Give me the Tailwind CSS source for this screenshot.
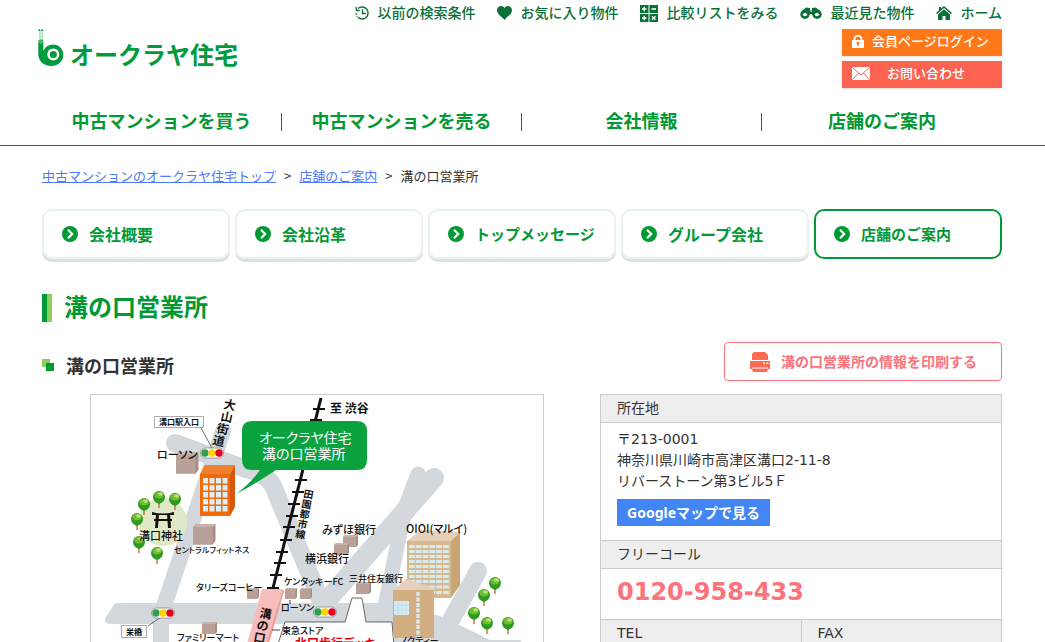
<!DOCTYPE html>
<html lang="ja">
<head>
  <meta charset="UTF-8" />
  <meta name="viewport" content="width=device-width, initial-scale=1.0" />
  <title>溝の口営業所 | オークラヤ住宅</title>
  <script src="https://cdn.jsdelivr.net/npm/@tailwindcss/browser@4"></script>
</head>
<body class="min-h-screen bg-white font-['DejaVu_Sans','Noto_Sans_CJK_JP',sans-serif] text-[#333333]">

  <!-- Header -->
  <header class="border-b border-[#0a8429]">
    <div class="max-w-[961px] mx-auto pr-px">

      <!-- Utility links -->
      <ul class="flex justify-end gap-[22px] pt-[3px] text-sm leading-5 font-medium text-[#0b7038]">
        <li>
          <a href="#" class="flex items-center gap-2">
            <svg class="w-[14px] h-[14px]" viewBox="0 0 14 14" fill="none" stroke="currentColor" stroke-width="1.4">
              <path d="M3 2.600A6 6 0 1 1 3 11.400" />
              <path d="M0.500 8h1.600M1.500 10.500h1" />
              <path d="M1 1l0.500 3.500h3.300M7.500 3.500V7.500H11" />
            </svg>
            以前の検索条件
          </a>
        </li>
        <li>
          <a href="#" class="flex items-center gap-2">
            <svg class="w-[15px] h-[14px]" viewBox="0 0 15 14" fill="currentColor">
              <path d="M7.500 14C5 10.500 0 8.500 0 4.200 0 1.800 1.800 0 4 0c1.600 0 2.800 0.800 3.500 2C8.200 0.800 9.400 0 11 0c2.200 0 4 1.800 4 4.200 0 4.300-5 6.300-7.500 9.800z" />
            </svg>
            お気に入り物件
          </a>
        </li>
        <li>
          <a href="#" class="flex items-center gap-2">
            <svg class="w-[18px] h-[17px]" viewBox="0 0 18 17">
              <path fill="currentColor" d="M0 0h8.500v8H0zM9.500 0H18v8H9.500zM0 9h8.500v8H0zM9.500 9H18v8H9.500z" />
              <path stroke="#fff" stroke-width="1.400" d="M2 4h4.500M4.250 1.800v4.400M11.500 4H16M2 13h4.500M4.250 10.800v4.400M12 11.300l3.500 3.500M15.500 11.300L12 14.800" />
            </svg>
            比較リストをみる
          </a>
        </li>
        <li>
          <a href="#" class="flex items-center gap-2">
            <svg class="w-[22px] h-[12px]" viewBox="0 0 22 12" fill="currentColor">
              <path d="M3 3L6 0.500l4 0.500v2h2V1l4-0.500L19 3l2 3-7 3-2-2h-2L8 9 1 6z" />
              <circle cx="5" cy="7.200" r="4.700" />
              <circle cx="17" cy="7.200" r="4.700" />
              <ellipse cx="5" cy="7.600" rx="2.200" ry="1.600" fill="#fff" />
              <ellipse cx="17" cy="7.600" rx="2.200" ry="1.600" fill="#fff" />
              <path d="M10.300 3.200h1.400v1.500h-1.400z" fill="#fff" />
            </svg>
            最近見た物件
          </a>
        </li>
        <li>
          <a href="#" class="flex items-center gap-2">
            <svg class="w-[16px] h-[14px]" viewBox="0 0 16 14" fill="currentColor">
              <path d="M8 0l8 7-1 1-7-6-7 6-1-1L3 4.300V1h2v1.600z" />
              <path d="M8 3.300l6 5.200V14H9.500v-4h-3v4H2V8.500z" />
            </svg>
            ホーム
          </a>
        </li>
      </ul>

      <!-- Logo and account buttons -->
      <div class="flex justify-between items-start pt-[6px]">
        <a href="#" class="flex items-end gap-[5px] -ml-1 font-['Noto_Sans_CJK_JP',sans-serif] text-[#009b3f]">
          <svg class="w-[27px] h-[38px]" viewBox="0 0 27 38">
            <path d="M2 2v10M4.200 2v10" stroke="#009b3f" stroke-width="0.500" />
            <path d="M0.300 0.500h2v1.600h-2zM3.200 0.500h2v1.600h-2z" fill="#009b3f" />
            <path d="M0.300 12.500Q0.300 10.500 2.800 10.500T5.300 12.500V22Q8 15.500 15.300 15.500C21 15.500 25.300 20 25.300 26S20.500 37 13 37 0.300 32 0.300 25z" fill="#009b3f" />
            <circle cx="15.300" cy="25.500" r="6" fill="#fff" />
            <circle cx="15.300" cy="25.500" r="3.600" fill="#009b3f" />
            <circle cx="2.800" cy="13" r="1.200" fill="none" stroke="#fff" stroke-width="0.500" />
          </svg>
          <span class="text-2xl leading-[26px] font-bold">オークラヤ住宅</span>
        </a>
        <div class="flex flex-col gap-[5px] w-40 text-[13px] font-medium text-white">
          <a href="#" class="flex items-center h-[27px] pl-[10px] pb-[2px] gap-2 bg-[#ff7819] shadow">
            <svg class="w-[12px] h-[13px]" viewBox="0 0 12 13">
              <path d="M2.500 6V3.800a3.500 3 0 0 1 7 0V6" fill="none" stroke="#fff" stroke-width="1.800" />
              <path d="M0 5h12v8H0z" fill="#fff" />
              <path d="M4.700 7h2.600v2l-0.500 0.500V11H5.300V9.500L4.700 9z" fill="#ff7819" />
            </svg>
            会員ページログイン
          </a>
          <a href="#" class="flex items-center h-[27px] pl-[10px] pb-[2px] gap-[17px] bg-[#fc6350] shadow">
            <svg class="w-[18px] h-[13px]" viewBox="0 0 18 13">
              <path d="M0 0h18v13H0z" fill="#fff" />
              <path d="M0.500 0.500L9 8l8.500-7.500M0.500 12.500L6.500 6M17.500 12.500L11.500 6" fill="none" stroke="#fc6350" />
            </svg>
            お問い合わせ
          </a>
        </div>
      </div>

      <!-- Global nav -->
      <nav class="grid grid-cols-4 pt-[25px] pb-[14px] text-lg leading-[18px] font-bold text-center text-[#009933]">
        <a href="#" class="border-r border-[#0a8429]">中古マンションを買う</a>
        <a href="#" class="border-r border-[#0a8429]">中古マンションを売る</a>
        <a href="#" class="border-r border-[#0a8429]">会社情報</a>
        <a href="#">店舗のご案内</a>
      </nav>
    </div>
  </header>

  <main class="max-w-[961px] mx-auto pr-px">

    <!-- Breadcrumb -->
    <nav class="flex gap-2 pt-5 text-[13px] leading-5 font-['Noto_Sans_CJK_JP',sans-serif]">
      <a href="#" class="text-[#4d78ff] underline">中古マンションのオークラヤ住宅トップ</a>
      <span>&gt;</span>
      <a href="#" class="text-[#4d78ff] underline">店舗のご案内</a>
      <span>&gt;</span>
      <span>溝の口営業所</span>
    </nav>

    <svg class="hidden">
      <symbol id="arrow" viewBox="0 0 16 16">
        <circle cx="8" cy="8" r="8" fill="#009933" />
        <path d="M6 3.800L10.200 8 6 12.200" fill="none" stroke="#fff" stroke-width="2.200" />
      </symbol>
    </svg>

    <!-- Section tabs -->
    <nav class="grid grid-cols-5 gap-[5px] mt-[23px] font-['Noto_Sans_CJK_JP',sans-serif] font-bold text-[#009933]">
      <a href="#" class="flex items-center gap-[11px] h-[50px] pl-[18px] rounded-[10px] border-2 border-[#e5f5ea] shadow-[0_3px_0_#e0e0e0]"><svg class="size-4"><use href="#arrow" /></svg>会社概要</a>
      <a href="#" class="flex items-center gap-[11px] h-[50px] pl-[18px] rounded-[10px] border-2 border-[#e5f5ea] shadow-[0_3px_0_#e0e0e0]"><svg class="size-4"><use href="#arrow" /></svg>会社沿革</a>
      <a href="#" class="flex items-center gap-[11px] h-[50px] pl-[18px] rounded-[10px] border-2 border-[#e5f5ea] shadow-[0_3px_0_#e0e0e0] text-[15px]"><svg class="size-4"><use href="#arrow" /></svg>トップメッセージ</a>
      <a href="#" class="flex items-center gap-[11px] h-[50px] pl-[18px] rounded-[10px] border-2 border-[#e5f5ea] shadow-[0_3px_0_#e0e0e0]"><svg class="size-4"><use href="#arrow" /></svg>グループ会社</a>
      <a href="#" class="flex items-center gap-[11px] h-[50px] pl-[18px] rounded-[10px] border-2 border-[#009933] text-[15px]"><svg class="size-4"><use href="#arrow" /></svg>店舗のご案内</a>
    </nav>

    <div class="flex gap-3 mt-[35px]">
      <span class="w-[10px] h-7 border-l-[5px] border-[#009933] bg-[#8fce5a]"></span>
      <h1 class="text-2xl leading-6 font-['Noto_Sans_CJK_JP',sans-serif] font-bold text-[#009933]">溝の口営業所</h1>
    </div>

    <div class="flex justify-between items-center mt-5">
      <div class="flex items-center gap-3 pt-[7px]">
        <svg class="size-3" viewBox="0 0 12 12">
          <path d="M0 0h8v8H0z" fill="#8fce5a" />
          <path d="M4 4h8v8H4z" fill="#009933" />
        </svg>
        <h2 class="text-lg leading-6 font-['Noto_Sans_CJK_JP',sans-serif] font-bold">溝の口営業所</h2>
      </div>
      <button class="flex items-center gap-[11px] h-[39px] pl-[25px] pr-6 rounded-[4px] border border-[#fb747c] text-sm font-bold text-[#fb747c]">
        <svg class="size-5" viewBox="0 0 20 20">
          <path d="M2 8V2L4 0h11l3 3v5z" fill="#ff6b52" />
          <path d="M0 9h20v8h-2v-2H2v2H0z" fill="#ff6b52" />
          <path d="M2 15h16v2H2z" fill="#ffb3a6" />
          <path d="M2 17h16l-1 3H3z" fill="#ff6b52" />
          <path d="M13 10.500h2v1.500h-2zM16.500 10.500h2v1.500h-2z" fill="#fff" />
        </svg>
        溝の口営業所の情報を印刷する
      </button>
    </div>

    <div class="flex justify-between items-start mt-[13px]">

      <!-- Area map -->
      <div class="ml-12 w-[454px] border border-[#cccccc]">
        <svg class="w-full font-['Noto_Sans_CJK_JP',sans-serif] [font-feature-settings:'palt']" viewBox="91 395 452 300" role="img" aria-label="溝の口営業所の地図">
          <defs>
            <g id="tree">
              <path d="M0 3v8" stroke="#c87942" stroke-width="1.500" />
              <path d="M-6 0a6 6 0 0 1 12 0q0 5-6 7q-6-2-6-7z" fill="#2d9b22" />
              <ellipse cx="0" cy="-2" rx="4.500" ry="3.500" fill="#70bd35" />
              <ellipse cx="1.500" cy="-3" rx="2.500" ry="1.800" fill="#bede72" />
            </g>
            <g id="house">
              <path d="M0 2l2-2h13v10l-2 2H0z" fill="#a98e87" />
              <path d="M0 2l2-2h13l-2 2z" fill="#c9b2ab" />
              <path d="M0 2h13v10H0z" fill="#b9a099" />
            </g>
            <g id="signal">
              <rect x="-11.500" y="-5" width="23" height="10" rx="5" fill="#fff" stroke="#888" stroke-width="0.800" />
              <circle cx="-7" r="3.700" fill="#2f9e4d" />
              <circle r="3.700" fill="#ffd400" />
              <circle cx="7" r="3.700" fill="#e60020" />
            </g>
          </defs>

          <!-- Roads -->
          <g fill="none" stroke="#d2d8dc" stroke-width="18" stroke-linecap="round" stroke-linejoin="round">
            <path d="M175 443L246 469Q268 474 274 488L322 604" />
            <path d="M223 431L164 606" stroke-width="16" />
            <path d="M418 474L405 508L385 606" stroke-width="15" />
            <path d="M434 478L322 606" stroke-width="20" />
            <path d="M478 571L444 633" />
            <path d="M161 615V700" stroke-width="16" />
          </g>
          <path d="M115 603H390L440 616L470 630L490 640H520L530 650H350L340 624H110Q103 624 106 617z" fill="#d2d8dc" />

          <!-- Railway and station -->
          <path d="M321 398L273 588" stroke="#111" stroke-width="3" />
          <path d="M313 409h12M310 420h12M295 480h12M292 492h12M288 504h12M286 516h12M283 527h12M280 540h12M276 552h12M274 563h12M270 575h12M267 588h12" stroke="#111" stroke-width="2" />
          <path d="M262 589h21l-30 106h-20z" fill="#f7bcbc" />
          <path d="M283 589l1 2-30 104h-3z" fill="#f09c86" />
          <path d="M352 598h10l4 24h26l6 73H262l23-73h60z" fill="#fff" stroke="#444" stroke-width="0.800" />

          <!-- Shrine -->
          <circle cx="163" cy="522" r="24" fill="#dfe9c8" />
          <path d="M152 512q11 3 22 0v3h-22zM154 519h18v2h-18zM156 514h3l-1 14h-3zM167 514h3l1 14h-3z" fill="#111" />
          <use href="#tree" x="159" y="497" />
          <use href="#tree" x="144" y="504" />
          <use href="#tree" x="175" y="499" />
          <use href="#tree" x="137" y="519" />
          <use href="#tree" x="139" y="542" />
          <use href="#tree" x="157" y="553" />
          <use href="#tree" x="495" y="583" />
          <use href="#tree" x="484" y="595" />
          <use href="#tree" x="474" y="613" />
          <use href="#tree" x="487" y="623" />
          <use href="#tree" x="508" y="623" />

          <!-- Small buildings -->
          <use href="#house" transform="translate(176 452) scale(1.5 1.8)" />
          <use href="#house" transform="translate(193 524) scale(1.5 1.7)" />
          <use href="#house" x="202" y="622" />
          <use href="#house" transform="translate(247 588) scale(0.8 0.9)" />
          <use href="#house" transform="translate(285 588) scale(0.8 0.9)" />
          <use href="#house" transform="translate(300 588) scale(0.8 0.9)" />
          <use href="#house" x="343" y="535" />
          <use href="#house" x="334" y="543" />
          <use href="#house" x="356" y="582" />

          <!-- Office -->
          <path d="M200 474l5-9h30l-5 9z" fill="#f08030" />
          <path d="M230 474l5-9v42l-5 9z" fill="#d9560a" />
          <path d="M200 474h30v42h-30z" fill="#f06a08" />
          <path d="M205.500 478v35M212 478v35M218.500 478v35M225 478v35" stroke="#dceef6" stroke-width="5" stroke-dasharray="5.500 1.500" />

          <!-- Marui and Nocty -->
          <path d="M407 541l14-11 39 2-9 9z" fill="#e6cfb8" />
          <path d="M451 541l9-9v53l-9 13z" fill="#c9a574" />
          <path d="M407 541h44v57h-44z" fill="#d8b98c" />
          <path d="M409 546.500h41M409 551.500h41M409 556.500h41M409 561.500h41M409 566.500h41M409 571.500h41M409 576.500h41M409 581.500h41M409 587h41M409 592.500h41" stroke="#d4eaf4" stroke-width="3" stroke-dasharray="5.800 1" />
          <path d="M393 590l13-11 28 9v2z" fill="#e6cfb8" />
          <path d="M393 590h41v48h-41z" fill="#d2ae80" />
          <path d="M394 601h15v14h-15z" fill="#d4eaf4" />
          <path d="M398 601v14M402 601v14M406 601v14M394 605h15M394 610h15" stroke="#bcd0d8" stroke-width="0.500" />
          <path d="M418 592v45" stroke="#d4eaf4" stroke-width="3.500" stroke-dasharray="4 1.500" />

          <!-- Traffic lights and their signs -->
          <path d="M201 428l11 20M148 626l13-9" stroke="#333" stroke-width="0.700" />
          <path d="M154.500 416.500h49v11h-49zM121.500 625.500h25v12h-25z" fill="#fff" stroke="#aaa" />
          <use href="#signal" x="212" y="453" />
          <use href="#signal" x="163" y="613" />
          <use href="#signal" x="325" y="612" />

          <!-- Callout -->
          <path d="M252 421h105q10 0 10 10v29q0 10-10 10H276Q252 486 236 494Q250 484 260 470h-8q-10 0-10-10v-29q0-10 10-10z" fill="#09a23f" />
          <g fill="#fff" font-size="14">
            <text x="259" y="443">オークラヤ住宅</text>
            <text x="262" y="459">溝の口営業所</text>
          </g>

          <g fill="#111" font-size="11" font-weight="500">
            <text x="157" y="459">ローソン</text>
            <text x="139" y="540">溝口神社</text>
            <text x="322" y="534">みずほ銀行</text>
            <text x="305" y="563">横浜銀行</text>
            <text x="406" y="533">OIOI(マルイ)</text>
          </g>
          <g fill="#111" font-size="9" font-weight="500">
            <text x="174" y="553" font-size="8">セントラルフィットネス</text>
            <text x="196" y="591">タリーズコーヒー</text>
            <text x="284" y="585">ケンタッキーFC</text>
            <text x="349" y="582">三井住友銀行</text>
            <text x="281" y="611">ローソン</text>
            <text x="282" y="634">東急ストア</text>
            <text x="177" y="641">ファミリーマート</text>
            <text x="400" y="644">ノクティー</text>
          </g>
          <path d="M272 630h8M290 600v4" stroke="#111" stroke-width="0.800" />
          <g fill="#111" font-weight="700">
            <text x="330" y="413" font-size="12">至 渋谷</text>
            <text x="159" y="425" font-size="8">溝口駅入口</text>
            <text x="126" y="635" font-size="8">栄橋</text>
            <!-- Names that run down along the street and the line, one position per character -->
            <text x="223 220 216 212" y="408 420 432 444" rotate="12" font-size="12">大山街道</text>
            <text x="303 301 299 297 295" y="497 507 517 527 537" rotate="10" font-size="10">田園都市線</text>
            <text x="259 256 253" y="617 629 641" rotate="10" font-size="12">溝の口</text>
          </g>
          <text x="295" y="648" font-size="12" font-weight="700" fill="#e00010">北口歩行デッキ</text>
        </svg>
      </div>

      <!-- Office details -->
      <table class="w-[402px] table-fixed border-collapse text-sm leading-[21px] text-left [&_th]:bg-[#eeeeee] [&_th]:font-normal [&_th]:px-4 [&_th]:py-[3px] [&_th]:border [&_th]:border-[#cccccc] [&_td]:px-4 [&_td]:border [&_td]:border-[#cccccc]">
        <tr><th colspan="2">所在地</th></tr>
        <tr>
          <td colspan="2" class="pt-[6px] pb-[14px]">
            <p>〒213-0001<br>神奈川県川崎市高津区溝口2-11-8<br>リバーストーン第3ビル5Ｆ</p>
            <a href="#" class="block w-fit mt-[7px] px-[10px] py-[3px] bg-[#4285f4] font-['Noto_Sans','Noto_Sans_CJK_JP',sans-serif] font-bold text-white">Googleマップで見る</a>
          </td>
        </tr>
        <tr><th colspan="2">フリーコール</th></tr>
        <tr><td colspan="2" class="pt-[7px] pb-[11px] text-2xl font-bold text-[#fb747c]">0120-958-433</td></tr>
        <tr><th>TEL</th><th>FAX</th></tr>
      </table>
    </div>
  </main>

</body>
</html>
